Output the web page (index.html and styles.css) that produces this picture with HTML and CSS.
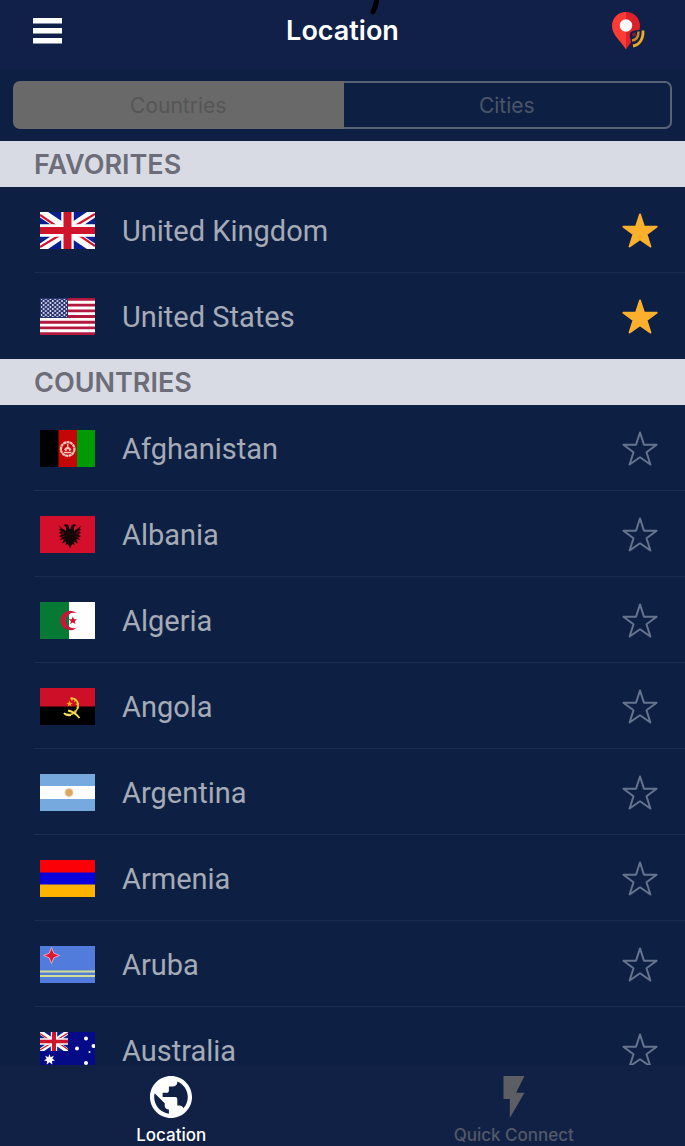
FILE: index.html
```
<!DOCTYPE html>
<html lang="en">

<head>
    <meta charset="UTF-8" />
    <meta name="viewport" content="width=device-width, initial-scale=1.0" />
    <title>Location</title>
    <link rel="stylesheet" href="styles.css">
</head>

<body>

    <!-- shared shapes -->
    <svg class="sprites" aria-hidden="true">
        <symbol id="star" viewBox="0 0 40 40">
            <path d="M20 3.500L24 15.800L36.600 15.800L26.500 23.300L30.400 35.500L20 28.300L9.600 35.500L13.500 23.300L3.400 15.800L16 15.800Z" />
        </symbol>
        <symbol id="union-jack" viewBox="0 0 55 37" preserveAspectRatio="none">
            <rect width="55" height="37" fill="#0a1f8f" />
            <path d="M0 0L55 37M55 0L0 37" stroke="#fff" stroke-width="9" />
            <path d="M0 3L25 20M55 34L30 17M55 2L30 17M0 35L25 20" stroke="#d0142c" stroke-width="2.200" />
            <path d="M27.500 0V37M0 18.500H55" stroke="#fff" stroke-width="12.500" />
            <path d="M27.500 0V37" stroke="#d0142c" stroke-width="8" />
            <path d="M0 18.500H55" stroke="#d0142c" stroke-width="7" />
        </symbol>
    </svg>

    <header class="top-bar">
        <button type="button" class="icon-btn" aria-label="Menu">
            <svg width="29" height="26" viewBox="0 0 29 26" fill="#fff">
                <rect width="29" height="5.500" />
                <rect y="10" width="29" height="5.500" />
                <rect y="20" width="29" height="5.500" />
            </svg>
        </button>
        <h1>Location</h1>
        <button type="button" class="icon-btn" aria-label="My location">
            <svg width="34" height="40" viewBox="0 0 34 40">
                <path d="M15 1C7 1 1 7 1 15C1 24 10 30 15 38.500V1Z" fill="#fb3b34" />
                <path d="M15 1C23 1 29 7 29 15C29 24 20 30 15 38.500V1Z" fill="#dc2228" />
                <circle cx="15" cy="14.500" r="6.200" fill="#fff" />
                <path d="M19 22Q22 19 27 19L32 19V36L21 37L20 30Q18 26 19 22Z" fill="#112048" />
                <circle cx="23" cy="23.500" r="2" fill="#dc2228" opacity=".5" />
                <path d="M27.500 20.500C27.500 25.500 25 29 21 29.500" fill="none" stroke="#c98a2c" stroke-width="2.500" />
                <path d="M32 19.500C32.500 28 28.500 34 22 35" fill="none" stroke="#eda928" stroke-width="2.800" />
            </svg>
        </button>
        <svg class="pen-mark" width="10" height="15" viewBox="0 0 10 15" aria-hidden="true">
            <path d="M7 -2Q6 6 3 12" fill="none" stroke="#000" stroke-width="5" stroke-linecap="round" />
        </svg>
    </header>

    <div class="tabs">
        <button type="button" class="tab active">Countries</button>
        <button type="button" class="tab">Cities</button>
    </div>

    <main class="list">
        <h2>FAVORITES</h2>
        <ul>
            <li>
                <svg class="flag" viewBox="0 0 55 37">
                    <use href="#union-jack" width="55" height="37" />
                </svg>
                <span class="name">United Kingdom</span>
                <button type="button" class="star on" aria-label="Remove United Kingdom from favorites"><svg><use href="#star" /></svg></button>
            </li>
            <li>
                <svg class="flag" viewBox="0 0 55 37">
                    <defs>
                        <pattern id="dots" width="4.600" height="4" patternUnits="userSpaceOnUse">
                            <circle cx="1.300" cy="1" r=".9" fill="#fff" />
                            <circle cx="3.600" cy="3" r=".9" fill="#fff" />
                        </pattern>
                    </defs>
                    <rect width="55" height="37" fill="#fff" />
                    <path d="M0 1.400H55M0 7.100H55M0 12.800H55M0 18.500H55M0 24.200H55M0 29.900H55M0 35.600H55" stroke="#b3193c" stroke-width="2.850" />
                    <rect width="28" height="20" fill="#2a3474" />
                    <rect x="1" y="1" width="26" height="18" fill="url(#dots)" />
                </svg>
                <span class="name">United States</span>
                <button type="button" class="star on" aria-label="Remove United States from favorites"><svg><use href="#star" /></svg></button>
            </li>
        </ul>

        <h2>COUNTRIES</h2>
        <ul>
            <li>
                <svg class="flag" viewBox="0 0 55 37">
                    <rect width="19" height="37" fill="#000" />
                    <rect x="18.500" width="18.500" height="37" fill="#c40606" />
                    <rect x="37" width="18" height="37" fill="#009a05" />
                    <g fill="none" stroke="#f5c5bd">
                        <circle cx="27.700" cy="19" r="6.800" stroke-width="2.200" stroke-dasharray="3 .4" />
                        <path d="M24 22.500H31.500M24.500 20Q27.700 15 31 20M27.700 14V17M26 21V18.500H29.500V21" stroke-width="1.400" />
                    </g>
                </svg>
                <span class="name">Afghanistan</span>
                <button type="button" class="star" aria-label="Add Afghanistan to favorites"><svg><use href="#star" /></svg></button>
            </li>
            <li>
                <svg class="flag" viewBox="0 0 55 37">
                    <rect width="55" height="37" fill="#d30f2b" />
                    <path d="M29.500 13L28.500 9.500L26 8L23.500 9L26 11L26 15L23 13L19 9.500L20.500 13L19 13L21 16L19 16.500L21.500 19L19 20L22 22L19.500 24L24 23L22 27.500L26 25.500L25.500 29L28 28L30 32.500L32 28L34.500 29L34 25.500L38 27.500L36 23L40.500 24L38 22L41 20L38.500 19L41 16.500L39 16L41 13L39.500 13L41 9.500L37 13L34 15L34 11L36.500 9L34 8L31.500 9.500L30.500 13Z" fill="#170608" />
                    <path d="M20 14L24 17M19.500 18H24M20 22L24.500 20M40 14L36 17M40.500 18H36M40 22L35.500 20" stroke="#a00d22" stroke-width=".6" />
                </svg>
                <span class="name">Albania</span>
                <button type="button" class="star" aria-label="Add Albania to favorites"><svg><use href="#star" /></svg></button>
            </li>
            <li>
                <svg class="flag" viewBox="0 0 55 37">
                    <rect width="55" height="37" fill="#fff" />
                    <rect width="29" height="37" fill="#067a34" />
                    <path d="M37 11.500A9.700 9.700 0 1 0 37 25.500A7.800 7.800 0 1 1 37 11.500Z" fill="#cf1238" />
                    <path d="M32.800 14.500L34 17.200L37 17.300L34.800 19.200L35.500 22L32.800 20.500L30.200 22L31 19.200L28.700 17.300L31.700 17.200Z" fill="#cf1238" />
                </svg>
                <span class="name">Algeria</span>
                <button type="button" class="star" aria-label="Add Algeria to favorites"><svg><use href="#star" /></svg></button>
            </li>
            <li>
                <svg class="flag" viewBox="0 0 55 37">
                    <rect width="55" height="37" fill="#000" />
                    <rect width="55" height="18.500" fill="#ce0f28" />
                    <path d="M30.500 10.500C36 9.500 39.500 15 37.500 20.500C35.500 25.500 30 28.500 24.500 25.500" fill="none" stroke="#e8cf2a" stroke-width="1.800" />
                    <path d="M31.500 9.500L32 12.500M36 11L34.500 13.500M39 15L36 16.500M39 20L36.500 19M36 25L34.500 22.500" stroke="#e8cf2a" stroke-width="1.200" />
                    <path d="M24 25Q26 28 31 27M28 22.500Q35 24 39.500 30" fill="none" stroke="#f3e35c" stroke-width="1.800" />
                    <path d="M29.500 12.500L30.300 14.800L32.800 14.900L30.800 16.300L31.500 18.500L29.500 17.200L27.500 18.500L28.200 16.300L26.200 14.900L28.700 14.800Z" fill="#f9a51b" />
                </svg>
                <span class="name">Angola</span>
                <button type="button" class="star" aria-label="Add Angola to favorites"><svg><use href="#star" /></svg></button>
            </li>
            <li>
                <svg class="flag" viewBox="0 0 55 37">
                    <rect width="55" height="37" fill="#76a9de" />
                    <rect y="12" width="55" height="13" fill="#fff" />
                    <circle cx="29" cy="18.500" r="4" fill="#d9a862" stroke="#eccb97" />
                </svg>
                <span class="name">Argentina</span>
                <button type="button" class="star" aria-label="Add Argentina to favorites"><svg><use href="#star" /></svg></button>
            </li>
            <li>
                <svg class="flag" viewBox="0 0 55 37">
                    <rect width="55" height="37" fill="#0a00dc" />
                    <rect width="55" height="12.500" fill="#fb0007" />
                    <rect y="24.500" width="55" height="12.500" fill="#ffb200" />
                </svg>
                <span class="name">Armenia</span>
                <button type="button" class="star" aria-label="Add Armenia to favorites"><svg><use href="#star" /></svg></button>
            </li>
            <li>
                <svg class="flag" viewBox="0 0 55 37">
                    <rect width="55" height="37" fill="#527cdc" />
                    <path d="M0 25.500H55M0 30H55" stroke="#d5dd90" stroke-width="2.200" />
                    <path d="M11.500 1.500L13.800 7.200L19.500 9.500L13.800 11.800L11.500 17.500L9.200 11.800L3.500 9.500L9.200 7.200Z" fill="#e3142d" stroke="#e9a5c4" stroke-width="1" />
                </svg>
                <span class="name">Aruba</span>
                <button type="button" class="star" aria-label="Add Aruba to favorites"><svg><use href="#star" /></svg></button>
            </li>
            <li>
                <svg class="flag" viewBox="0 0 55 37">
                    <rect width="55" height="37" fill="#050b87" />
                    <use href="#union-jack" width="28" height="19" />
                    <g fill="#fff">
                        <path d="M9.500 22L10.600 25.200L13.800 23.800L12.400 26.800L15 28.500L12 29L12.300 32.500L9.500 30.300L6.700 32.500L7 29L4 28.500L6.600 26.800L5.200 23.800L8.400 25.200Z" />
                        <circle cx="46" cy="6.500" r="2" />
                        <circle cx="37" cy="16.500" r="2" />
                        <circle cx="53.500" cy="14" r="2" />
                        <circle cx="49.500" cy="20" r="1" />
                        <circle cx="46" cy="31" r="2" />
                    </g>
                </svg>
                <span class="name">Australia</span>
                <button type="button" class="star" aria-label="Add Australia to favorites"><svg><use href="#star" /></svg></button>
            </li>
        </ul>
    </main>

    <nav class="bottom-nav">
        <a href="#location" class="active">
            <svg viewBox="2 2 20 20">
                <path d="M12 2C6.480 2 2 6.480 2 12s4.480 10 10 10 10-4.480 10-10S17.520 2 12 2zm-1 17.930c-3.950-.49-7-3.850-7-7.930 0-.62.08-1.210.21-1.790L9 15v1c0 1.100.9 2 2 2v1.930zm6.900-2.540c-.26-.81-1-1.390-1.900-1.390h-1v-3c0-.55-.45-1-1-1H8v-2h2c.55 0 1-.45 1-1V7h2c1.100 0 2-.9 2-2v-.41c2.930 1.190 5 4.060 5 7.410 0 2.080-.8 3.970-2.100 5.390z" />
            </svg>
            <span>Location</span>
        </a>
        <a href="#quick-connect">
            <svg viewBox="2 2 20 20">
                <path d="M7 2v11h3v9l7-12h-4l4-8z" />
            </svg>
            <span>Quick Connect</span>
        </a>
    </nav>

</body>

</html>
```
FILE: styles.css
```
* {
    box-sizing: border-box;
}

body {
    margin: 0;
    height: 100vh;
    display: flex;
    flex-direction: column;
    background-color: #0d2043;
    font-family: Inter, "Liberation Sans", sans-serif;
    overflow: hidden;
}

button {
    padding: 0;
    border: none;
    background: none;
    font-family: inherit;
    cursor: pointer;
}

.sprites {
    position: absolute;
    width: 0;
    height: 0;
}

/* --- Header --- */
.top-bar {
    position: relative;
    flex: none;
    height: 69px;
    padding: 0 40px 7px 33px;
    display: grid;
    grid-template-columns: 41px 1fr 34px;
    align-items: center;
    background-color: #112048;
}

.top-bar h1 {
    margin: 0;
    color: #fff;
    font-size: 27px;
    font-weight: 600;
    line-height: 32px;
    text-align: center;
}

.icon-btn {
    display: flex;
}

.pen-mark {
    position: absolute;
    top: 0;
    left: 54%;
}

/* --- Countries / Cities switch --- */
.tabs {
    flex: none;
    display: flex;
    height: 48px;
    margin: 12px 13px;
}

.tab {
    flex: 1;
    border: 2px solid #5a6376;
    border-left: none;
    border-radius: 0 7px 7px 0;
    color: #4c5569;
    font-size: 21px;
}

.tab.active {
    border: 2px solid #696969;
    border-radius: 7px 0 0 7px;
    background-color: #696969;
    color: #555;
}

/* --- List --- */
.list {
    flex: 1;
    min-height: 0;
    overflow-y: auto;
    scrollbar-width: none;
}

.list h2 {
    margin: 0;
    padding: 2px 34px 0;
    background-color: #d9dbe4;
    color: #6c6d78;
    font-size: 27px;
    font-weight: 600;
    line-height: 44px;
}

.list ul {
    margin: 0;
    padding: 0 0 0 34px;
    list-style: none;
}

.list li {
    display: flex;
    align-items: center;
    height: 86px;
    padding: 2px 25px 0 6px;
    border-bottom: 1px solid #1c2e50;
}

.list li:last-child {
    border-bottom-color: transparent;
}

.flag {
    flex: none;
    width: 55px;
    height: 37px;
}

.name {
    flex: 1;
    margin-left: 27px;
    color: #a5abb7;
    font-family: Roboto, "Liberation Sans", sans-serif;
    font-size: 29px;
    line-height: 28px;
}

.star svg {
    display: block;
    width: 40px;
    height: 40px;
    fill: none;
    stroke: #66738f;
    stroke-width: 2;
    stroke-linejoin: round;
}

.star.on svg {
    fill: #fbb02d;
    stroke: #fbb02d;
}

/* --- Bottom navigation --- */
.bottom-nav {
    flex: none;
    display: flex;
    height: 81px;
    background-color: #112145;
}

.bottom-nav a {
    flex: 1;
    display: flex;
    flex-direction: column;
    align-items: center;
    gap: 7px;
    padding-top: 11px;
    color: #535966;
    font-size: 17px;
    font-weight: 500;
    line-height: 20px;
    text-decoration: none;
}

.bottom-nav svg {
    flex: none;
    width: 42px;
    height: 42px;
    fill: #5d5e63;
}

.bottom-nav .active {
    color: #fff;
}

.bottom-nav .active svg {
    fill: #fff;
}
```
